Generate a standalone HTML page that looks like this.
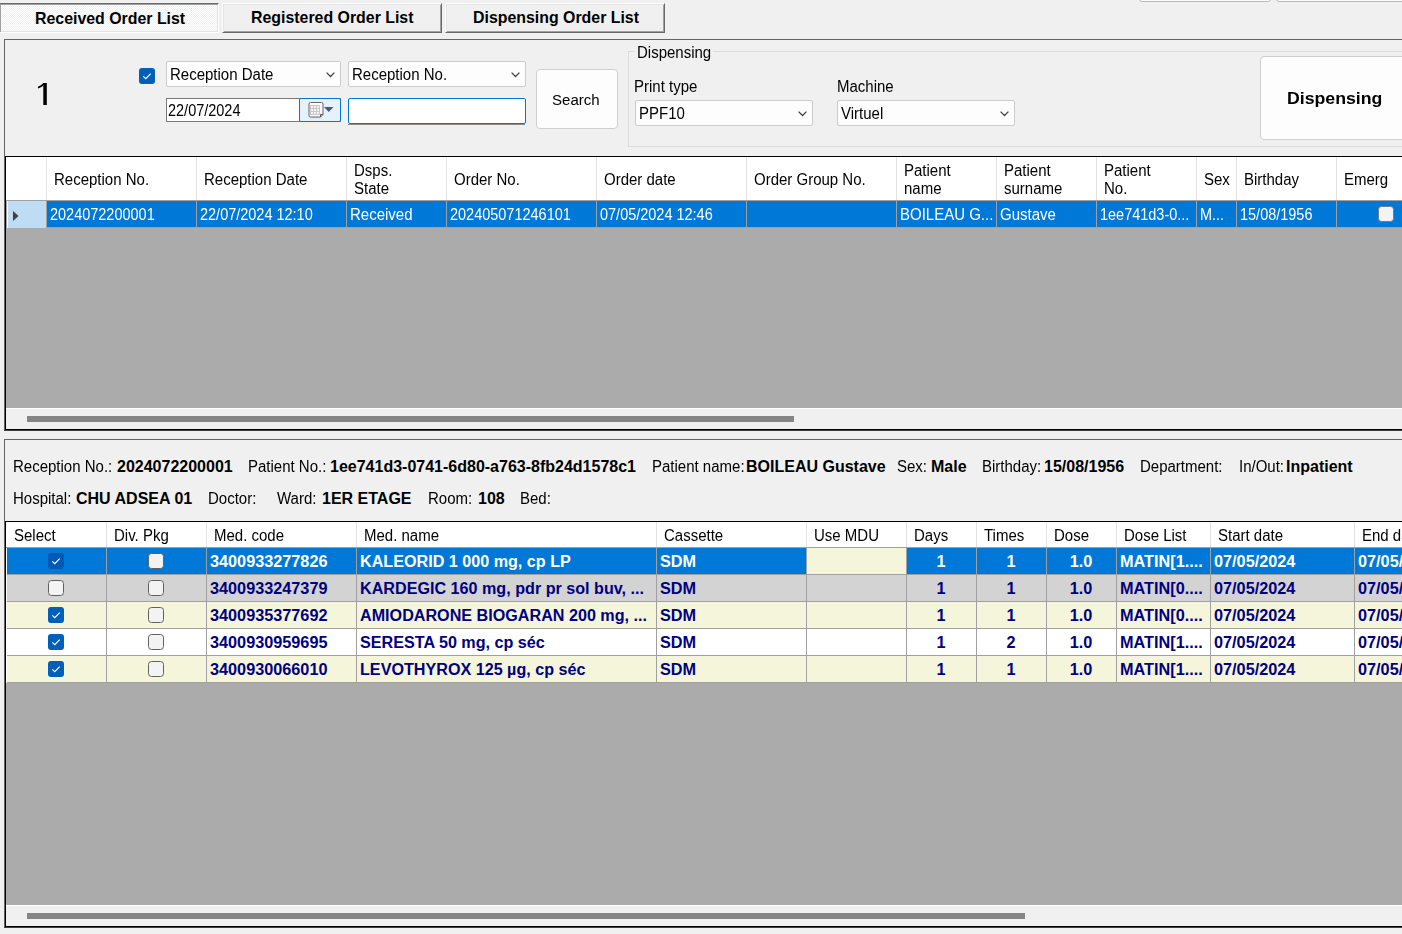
<!DOCTYPE html>
<html><head><meta charset="utf-8"><style>
html,body{margin:0;padding:0}
body{width:1402px;height:934px;overflow:hidden;position:relative;background:#F0F0F0;font-family:"Liberation Sans",sans-serif;}
body>div,body>svg{position:absolute}
.t{white-space:nowrap;color:#000}
.pressed{box-sizing:border-box;border-top:1px solid #696969;border-left:1px solid #696969;border-right:1px solid #fff;border-bottom:1px solid #fff;
 background-color:#fff;background-image:linear-gradient(45deg,#F0F0F0 25%,transparent 25%,transparent 75%,#F0F0F0 75%),linear-gradient(45deg,#F0F0F0 25%,transparent 25%,transparent 75%,#F0F0F0 75%);background-size:2px 2px;background-position:0 0,1px 1px;
 box-shadow:inset 1px 1px 0 #A0A0A0, inset -1px -1px 0 #E3E3E3}
.raised{box-sizing:border-box;border-top:1px solid #fff;border-left:1px solid #fff;border-right:1px solid #696969;border-bottom:1px solid #696969;background:#F0F0F0;box-shadow:inset 1px 1px 0 #E3E3E3, inset -1px -1px 0 #A0A0A0}
.combo{box-sizing:border-box;border:1px solid #CCCCCC;background:#FDFDFD;border-radius:2px}
.btn{box-sizing:border-box;border:1px solid #D0D0D0;background:#FDFDFD;border-radius:4px}
</style></head><body>
<div style="left:1139px;top:-10px;width:132px;height:12px;border:1px solid #B8B8B8;border-radius:3px;background:#FDFDFD;box-sizing:border-box"></div>
<div style="left:1276px;top:-10px;width:140px;height:12px;border:1px solid #B8B8B8;border-radius:3px;background:#FDFDFD;box-sizing:border-box"></div>
<div class="pressed" style="left:-1px;top:3px;width:220px;height:30px"></div>
<div class="t" style="left:35px;top:11px;font-size:15.9px;line-height:15.9px;font-weight:bold;color:#000;">Received Order List</div>
<div class="raised" style="left:222px;top:3px;width:220px;height:30px"></div>
<div class="t" style="left:251px;top:10px;font-size:15.9px;line-height:15.9px;font-weight:bold;color:#000;">Registered Order List</div>
<div class="raised" style="left:445px;top:3px;width:220px;height:30px"></div>
<div class="t" style="left:473px;top:10px;font-size:15.9px;line-height:15.9px;font-weight:bold;color:#000;">Dispensing Order List</div>
<div style="left:4px;top:39px;width:1402px;height:1px;background:#646464"></div>
<div style="left:4px;top:39px;width:1px;height:392px;background:#646464"></div>
<svg style="left:30px;top:78px" width="24" height="30" viewBox="0 0 24 30"><rect x="13.3" y="5" width="3.5" height="22" fill="#000"/><path d="M8 8.6 L8 10.6 C10.5 9.8 12.5 8.4 14 6.8 L14 5 L13.3 5 C11.8 6.8 10 7.9 8 8.6 Z" fill="#000"/></svg>
<svg style="left:139px;top:68px" width="16" height="16" viewBox="0 0 16 16"><rect x="0" y="0" width="16" height="16" rx="3" fill="#005FB8"/><path d="M4.3 8.3 L6.8 10.7 L11.7 5.6" fill="none" stroke="#fff" stroke-width="1.15"/></svg>
<div class="combo" style="left:166px;top:61px;width:175px;height:26px"></div>
<div class="t" style="left:170px;top:67px;font-size:16px;line-height:16px;color:#000;transform:scaleX(0.9375);transform-origin:0 0;">Reception Date</div>
<svg style="left:326px;top:72px" width="10" height="6" viewBox="0 0 10 6"><path d="M0.6 0.6 L4.5 4.5 L8.4 0.6" fill="none" stroke="#404040" stroke-width="1.25"/></svg>
<div class="combo" style="left:348px;top:61px;width:178px;height:26px"></div>
<div class="t" style="left:352px;top:67px;font-size:16px;line-height:16px;color:#000;transform:scaleX(0.9375);transform-origin:0 0;">Reception No.</div>
<svg style="left:511px;top:72px" width="10" height="6" viewBox="0 0 10 6"><path d="M0.6 0.6 L4.5 4.5 L8.4 0.6" fill="none" stroke="#404040" stroke-width="1.25"/></svg>
<div style="left:166px;top:98px;width:175px;height:24px;border:1px solid #7A7A7A;background:#fff;box-sizing:border-box"></div>
<div class="t" style="left:168px;top:103px;font-size:16px;line-height:16px;color:#000;transform:scaleX(0.905);transform-origin:0 0;">22/07/2024</div>
<div style="left:299px;top:98px;width:42px;height:24px;border:1px solid #0078D7;background:#E5F1FB;box-sizing:border-box;border-radius:2px"></div>
<svg style="left:305px;top:100px" width="32" height="20" viewBox="0 0 32 20"><defs><filter id="sh" x="-50%" y="-50%" width="200%" height="200%"><feGaussianBlur stdDeviation="1"/></filter></defs><rect x="4" y="4" width="13" height="14" rx="2" fill="#9BB0C8" opacity="0.35" filter="url(#sh)"/><path d="M5.5 2.5 h11 a1.5 1.5 0 0 1 1.5 1.5 v10.5 l-2.5 2.5 h-10 a1.5 1.5 0 0 1 -1.5 -1.5 v-11.5 a1.5 1.5 0 0 1 1.5 -1.5z" fill="#FAFAFC" stroke="#6E6360" stroke-width="1"/><rect x="5.5" y="5.5" width="9" height="9" fill="#F2F2FA" stroke="#C8C8C8" stroke-width="1"/><path d="M8.5 5.5v9M11.5 5.5v9M5.5 8.5h9M5.5 11.5h9" stroke="#C8C8C8" stroke-width="1"/><path d="M15.5 17 v-2.5 h2.5" fill="none" stroke="#5A5050" stroke-width="1"/><path d="M19 7 h9.5 l-4.75 5 z" fill="#4A5A82"/></svg>
<div style="left:348px;top:98px;width:178px;height:26px;border:1px solid #0078D7;background:#fff;box-sizing:border-box;border-radius:2px"></div>
<div style="left:348px;top:124px;width:177px;height:1px;background:#8A8A8A"></div>
<div class="btn" style="left:536px;top:69px;width:82px;height:60px"></div>
<div class="t" style="left:552px;top:92px;font-size:15.5px;line-height:15.5px;color:#000;transform:scaleX(0.97);transform-origin:0 0;">Search</div>
<div style="left:628px;top:51px;width:1000px;height:96px;border:1px solid #DCDCDC;box-sizing:border-box"></div>
<div style="left:634px;top:44px;width:79px;height:14px;background:#F0F0F0"></div>
<div class="t" style="left:637px;top:45px;font-size:16px;line-height:16px;color:#000;transform:scaleX(0.9375);transform-origin:0 0;">Dispensing</div>
<div class="t" style="left:634px;top:79px;font-size:16px;line-height:16px;color:#000;transform:scaleX(0.9375);transform-origin:0 0;">Print type</div>
<div class="combo" style="left:635px;top:100px;width:178px;height:26px"></div>
<div class="t" style="left:639px;top:106px;font-size:16px;line-height:16px;color:#000;transform:scaleX(0.9375);transform-origin:0 0;">PPF10</div>
<svg style="left:798px;top:111px" width="10" height="6" viewBox="0 0 10 6"><path d="M0.6 0.6 L4.5 4.5 L8.4 0.6" fill="none" stroke="#404040" stroke-width="1.25"/></svg>
<div class="t" style="left:837px;top:79px;font-size:16px;line-height:16px;color:#000;transform:scaleX(0.9375);transform-origin:0 0;">Machine</div>
<div class="combo" style="left:837px;top:100px;width:178px;height:26px"></div>
<div class="t" style="left:841px;top:106px;font-size:16px;line-height:16px;color:#000;transform:scaleX(0.9375);transform-origin:0 0;">Virtuel</div>
<svg style="left:1000px;top:111px" width="10" height="6" viewBox="0 0 10 6"><path d="M0.6 0.6 L4.5 4.5 L8.4 0.6" fill="none" stroke="#404040" stroke-width="1.25"/></svg>
<div class="btn" style="left:1260px;top:56px;width:200px;height:84px"></div>
<div class="t" style="left:1287px;top:90px;font-size:17.2px;line-height:17.2px;font-weight:bold;color:#000;transform:scaleX(1.03);transform-origin:0 0;">Dispensing</div>
<div style="left:5px;top:156px;width:1402px;height:274px;background:#ABABAB"></div>
<div style="left:5px;top:156px;width:1402px;height:1px;background:#000"></div>
<div style="left:5px;top:156px;width:1px;height:274px;background:#000"></div>
<div style="left:5px;top:429px;width:1402px;height:1px;background:#000"></div>
<div style="left:4px;top:430px;width:1402px;height:1px;background:#404040"></div>
<div style="left:6px;top:157px;width:1402px;height:43px;background:#fff"></div>
<div style="left:46px;top:157px;width:1px;height:43px;background:#E3E3E3"></div>
<div style="left:196px;top:157px;width:1px;height:43px;background:#E3E3E3"></div>
<div style="left:346px;top:157px;width:1px;height:43px;background:#E3E3E3"></div>
<div style="left:446px;top:157px;width:1px;height:43px;background:#E3E3E3"></div>
<div style="left:596px;top:157px;width:1px;height:43px;background:#E3E3E3"></div>
<div style="left:746px;top:157px;width:1px;height:43px;background:#E3E3E3"></div>
<div style="left:896px;top:157px;width:1px;height:43px;background:#E3E3E3"></div>
<div style="left:996px;top:157px;width:1px;height:43px;background:#E3E3E3"></div>
<div style="left:1096px;top:157px;width:1px;height:43px;background:#E3E3E3"></div>
<div style="left:1196px;top:157px;width:1px;height:43px;background:#E3E3E3"></div>
<div style="left:1236px;top:157px;width:1px;height:43px;background:#E3E3E3"></div>
<div style="left:1336px;top:157px;width:1px;height:43px;background:#E3E3E3"></div>
<div style="left:6px;top:200px;width:1402px;height:1px;background:#A0A0A0"></div>
<div class="t" style="left:54px;top:172px;font-size:16px;line-height:16px;color:#000;transform:scaleX(0.9375);transform-origin:0 0;">Reception No.</div>
<div class="t" style="left:204px;top:172px;font-size:16px;line-height:16px;color:#000;transform:scaleX(0.9375);transform-origin:0 0;">Reception Date</div>
<div class="t" style="left:354px;top:163px;font-size:16px;line-height:16px;color:#000;transform:scaleX(0.9375);transform-origin:0 0;">Dsps.</div>
<div class="t" style="left:354px;top:181px;font-size:16px;line-height:16px;color:#000;transform:scaleX(0.9375);transform-origin:0 0;">State</div>
<div class="t" style="left:454px;top:172px;font-size:16px;line-height:16px;color:#000;transform:scaleX(0.9375);transform-origin:0 0;">Order No.</div>
<div class="t" style="left:604px;top:172px;font-size:16px;line-height:16px;color:#000;transform:scaleX(0.9375);transform-origin:0 0;">Order date</div>
<div class="t" style="left:754px;top:172px;font-size:16px;line-height:16px;color:#000;transform:scaleX(0.9375);transform-origin:0 0;">Order Group No.</div>
<div class="t" style="left:904px;top:163px;font-size:16px;line-height:16px;color:#000;transform:scaleX(0.9375);transform-origin:0 0;">Patient</div>
<div class="t" style="left:904px;top:181px;font-size:16px;line-height:16px;color:#000;transform:scaleX(0.9375);transform-origin:0 0;">name</div>
<div class="t" style="left:1004px;top:163px;font-size:16px;line-height:16px;color:#000;transform:scaleX(0.9375);transform-origin:0 0;">Patient</div>
<div class="t" style="left:1004px;top:181px;font-size:16px;line-height:16px;color:#000;transform:scaleX(0.9375);transform-origin:0 0;">surname</div>
<div class="t" style="left:1104px;top:163px;font-size:16px;line-height:16px;color:#000;transform:scaleX(0.9375);transform-origin:0 0;">Patient</div>
<div class="t" style="left:1104px;top:181px;font-size:16px;line-height:16px;color:#000;transform:scaleX(0.9375);transform-origin:0 0;">No.</div>
<div class="t" style="left:1204px;top:172px;font-size:16px;line-height:16px;color:#000;transform:scaleX(0.9375);transform-origin:0 0;">Sex</div>
<div class="t" style="left:1244px;top:172px;font-size:16px;line-height:16px;color:#000;transform:scaleX(0.9375);transform-origin:0 0;">Birthday</div>
<div class="t" style="left:1344px;top:172px;font-size:16px;line-height:16px;color:#000;transform:scaleX(0.9375);transform-origin:0 0;">Emerg</div>
<div style="left:6px;top:201px;width:40px;height:27px;background:#BEDCF3"></div>
<div style="left:6px;top:201px;width:1px;height:27px;background:#A0A0A0"></div>
<div style="left:7px;top:201px;width:1px;height:27px;background:#FFFFFF"></div>
<svg style="left:12px;top:210px" width="8" height="12" viewBox="0 0 8 12"><path d="M1 1 L6.5 6 L1 11 Z" fill="#404040"/></svg>
<div style="left:47px;top:201px;width:1402px;height:26px;background:#0078D7"></div>
<div style="left:196px;top:201px;width:1px;height:27px;background:#A0A0A0"></div>
<div style="left:346px;top:201px;width:1px;height:27px;background:#A0A0A0"></div>
<div style="left:446px;top:201px;width:1px;height:27px;background:#A0A0A0"></div>
<div style="left:596px;top:201px;width:1px;height:27px;background:#A0A0A0"></div>
<div style="left:746px;top:201px;width:1px;height:27px;background:#A0A0A0"></div>
<div style="left:896px;top:201px;width:1px;height:27px;background:#A0A0A0"></div>
<div style="left:996px;top:201px;width:1px;height:27px;background:#A0A0A0"></div>
<div style="left:1096px;top:201px;width:1px;height:27px;background:#A0A0A0"></div>
<div style="left:1196px;top:201px;width:1px;height:27px;background:#A0A0A0"></div>
<div style="left:1236px;top:201px;width:1px;height:27px;background:#A0A0A0"></div>
<div style="left:1336px;top:201px;width:1px;height:27px;background:#A0A0A0"></div>
<div style="left:47px;top:227px;width:1402px;height:1px;background:#A0A0A0"></div>
<div style="left:46px;top:201px;width:1px;height:27px;background:#A0A0A0"></div>
<div class="t" style="left:50px;top:207px;font-size:16px;line-height:16px;color:#fff;transform:scaleX(0.905);transform-origin:0 0;">2024072200001</div>
<div class="t" style="left:200px;top:207px;font-size:16px;line-height:16px;color:#fff;transform:scaleX(0.905);transform-origin:0 0;">22/07/2024 12:10</div>
<div class="t" style="left:350px;top:207px;font-size:16px;line-height:16px;color:#fff;transform:scaleX(0.9375);transform-origin:0 0;">Received</div>
<div class="t" style="left:450px;top:207px;font-size:16px;line-height:16px;color:#fff;transform:scaleX(0.905);transform-origin:0 0;">202405071246101</div>
<div class="t" style="left:600px;top:207px;font-size:16px;line-height:16px;color:#fff;transform:scaleX(0.905);transform-origin:0 0;">07/05/2024 12:46</div>
<div class="t" style="left:900px;top:207px;font-size:16px;line-height:16px;color:#fff;transform:scaleX(0.9375);transform-origin:0 0;">BOILEAU G...</div>
<div class="t" style="left:1000px;top:207px;font-size:16px;line-height:16px;color:#fff;transform:scaleX(0.9375);transform-origin:0 0;">Gustave</div>
<div class="t" style="left:1100px;top:207px;font-size:16px;line-height:16px;color:#fff;transform:scaleX(0.905);transform-origin:0 0;">1ee741d3-0...</div>
<div class="t" style="left:1200px;top:207px;font-size:16px;line-height:16px;color:#fff;transform:scaleX(0.905);transform-origin:0 0;">M...</div>
<div class="t" style="left:1240px;top:207px;font-size:16px;line-height:16px;color:#fff;transform:scaleX(0.905);transform-origin:0 0;">15/08/1956</div>
<svg style="left:1378px;top:206px" width="16" height="16" viewBox="0 0 16 16"><rect x="0.5" y="0.5" width="15" height="15" rx="3" fill="#F3F3F3" stroke="#7A7A7A" stroke-width="1"/></svg>
<div style="left:6px;top:408px;width:1402px;height:21px;background:#F0F0F0"></div>
<div style="left:6px;top:408px;width:1402px;height:1px;background:#FFFFFF"></div>
<div style="left:27px;top:416px;width:767px;height:6px;background:#858585"></div>
<div style="left:4px;top:439px;width:1402px;height:1px;background:#646464"></div>
<div style="left:4px;top:439px;width:1px;height:489px;background:#646464"></div>
<div class="t" style="left:13px;top:459px;font-size:16px;line-height:16px;color:#000;transform:scaleX(0.9375);transform-origin:0 0;">Reception No.:</div>
<div class="t" style="left:117px;top:459px;font-size:16px;line-height:16px;font-weight:bold;color:#000;">2024072200001</div>
<div class="t" style="left:248px;top:459px;font-size:16px;line-height:16px;color:#000;transform:scaleX(0.9375);transform-origin:0 0;">Patient No.:</div>
<div class="t" style="left:330px;top:459px;font-size:16px;line-height:16px;font-weight:bold;color:#000;">1ee741d3-0741-6d80-a763-8fb24d1578c1</div>
<div class="t" style="left:652px;top:459px;font-size:16px;line-height:16px;color:#000;transform:scaleX(0.9375);transform-origin:0 0;">Patient name:</div>
<div class="t" style="left:746px;top:459px;font-size:16px;line-height:16px;font-weight:bold;color:#000;">BOILEAU Gustave</div>
<div class="t" style="left:897px;top:459px;font-size:16px;line-height:16px;color:#000;transform:scaleX(0.9375);transform-origin:0 0;">Sex:</div>
<div class="t" style="left:931px;top:459px;font-size:16px;line-height:16px;font-weight:bold;color:#000;">Male</div>
<div class="t" style="left:982px;top:459px;font-size:16px;line-height:16px;color:#000;transform:scaleX(0.9375);transform-origin:0 0;">Birthday:</div>
<div class="t" style="left:1044px;top:459px;font-size:16px;line-height:16px;font-weight:bold;color:#000;">15/08/1956</div>
<div class="t" style="left:1140px;top:459px;font-size:16px;line-height:16px;color:#000;transform:scaleX(0.9375);transform-origin:0 0;">Department:</div>
<div class="t" style="left:1239px;top:459px;font-size:16px;line-height:16px;color:#000;transform:scaleX(0.9375);transform-origin:0 0;">In/Out:</div>
<div class="t" style="left:1286px;top:459px;font-size:16px;line-height:16px;font-weight:bold;color:#000;">Inpatient</div>
<div class="t" style="left:13px;top:491px;font-size:16px;line-height:16px;color:#000;transform:scaleX(0.9375);transform-origin:0 0;">Hospital:</div>
<div class="t" style="left:76px;top:491px;font-size:16px;line-height:16px;font-weight:bold;color:#000;">CHU ADSEA 01</div>
<div class="t" style="left:208px;top:491px;font-size:16px;line-height:16px;color:#000;transform:scaleX(0.9375);transform-origin:0 0;">Doctor:</div>
<div class="t" style="left:277px;top:491px;font-size:16px;line-height:16px;color:#000;transform:scaleX(0.9375);transform-origin:0 0;">Ward:</div>
<div class="t" style="left:322px;top:491px;font-size:16px;line-height:16px;font-weight:bold;color:#000;">1ER ETAGE</div>
<div class="t" style="left:428px;top:491px;font-size:16px;line-height:16px;color:#000;transform:scaleX(0.9375);transform-origin:0 0;">Room:</div>
<div class="t" style="left:478px;top:491px;font-size:16px;line-height:16px;font-weight:bold;color:#000;">108</div>
<div class="t" style="left:520px;top:491px;font-size:16px;line-height:16px;color:#000;transform:scaleX(0.9375);transform-origin:0 0;">Bed:</div>
<div style="left:5px;top:521px;width:1402px;height:406px;background:#ABABAB"></div>
<div style="left:5px;top:521px;width:1402px;height:1px;background:#000"></div>
<div style="left:5px;top:521px;width:1px;height:406px;background:#000"></div>
<div style="left:5px;top:926px;width:1402px;height:1px;background:#000"></div>
<div style="left:4px;top:927px;width:1402px;height:1px;background:#404040"></div>
<div style="left:6px;top:522px;width:1402px;height:25px;background:#fff"></div>
<div style="left:106px;top:522px;width:1px;height:25px;background:#E3E3E3"></div>
<div style="left:206px;top:522px;width:1px;height:25px;background:#E3E3E3"></div>
<div style="left:356px;top:522px;width:1px;height:25px;background:#E3E3E3"></div>
<div style="left:656px;top:522px;width:1px;height:25px;background:#E3E3E3"></div>
<div style="left:806px;top:522px;width:1px;height:25px;background:#E3E3E3"></div>
<div style="left:906px;top:522px;width:1px;height:25px;background:#E3E3E3"></div>
<div style="left:976px;top:522px;width:1px;height:25px;background:#E3E3E3"></div>
<div style="left:1046px;top:522px;width:1px;height:25px;background:#E3E3E3"></div>
<div style="left:1116px;top:522px;width:1px;height:25px;background:#E3E3E3"></div>
<div style="left:1210px;top:522px;width:1px;height:25px;background:#E3E3E3"></div>
<div style="left:1354px;top:522px;width:1px;height:25px;background:#E3E3E3"></div>
<div style="left:6px;top:547px;width:1402px;height:1px;background:#A0A0A0"></div>
<div class="t" style="left:14px;top:528px;font-size:16px;line-height:16px;color:#000;transform:scaleX(0.9375);transform-origin:0 0;">Select</div>
<div class="t" style="left:114px;top:528px;font-size:16px;line-height:16px;color:#000;transform:scaleX(0.9375);transform-origin:0 0;">Div. Pkg</div>
<div class="t" style="left:214px;top:528px;font-size:16px;line-height:16px;color:#000;transform:scaleX(0.9375);transform-origin:0 0;">Med. code</div>
<div class="t" style="left:364px;top:528px;font-size:16px;line-height:16px;color:#000;transform:scaleX(0.9375);transform-origin:0 0;">Med. name</div>
<div class="t" style="left:664px;top:528px;font-size:16px;line-height:16px;color:#000;transform:scaleX(0.9375);transform-origin:0 0;">Cassette</div>
<div class="t" style="left:814px;top:528px;font-size:16px;line-height:16px;color:#000;transform:scaleX(0.9375);transform-origin:0 0;">Use MDU</div>
<div class="t" style="left:914px;top:528px;font-size:16px;line-height:16px;color:#000;transform:scaleX(0.9375);transform-origin:0 0;">Days</div>
<div class="t" style="left:984px;top:528px;font-size:16px;line-height:16px;color:#000;transform:scaleX(0.9375);transform-origin:0 0;">Times</div>
<div class="t" style="left:1054px;top:528px;font-size:16px;line-height:16px;color:#000;transform:scaleX(0.9375);transform-origin:0 0;">Dose</div>
<div class="t" style="left:1124px;top:528px;font-size:16px;line-height:16px;color:#000;transform:scaleX(0.9375);transform-origin:0 0;">Dose List</div>
<div class="t" style="left:1218px;top:528px;font-size:16px;line-height:16px;color:#000;transform:scaleX(0.9375);transform-origin:0 0;">Start date</div>
<div class="t" style="left:1362px;top:528px;font-size:16px;line-height:16px;color:#000;transform:scaleX(0.9375);transform-origin:0 0;">End date</div>
<div style="left:6px;top:548px;width:1402px;height:26px;background:#0078D7"></div>
<div style="left:807px;top:548px;width:99px;height:26px;background:#F5F5DC"></div>
<div style="left:6px;top:574px;width:1402px;height:1px;background:#A0A0A0"></div>
<div style="left:106px;top:548px;width:1px;height:27px;background:#A0A0A0"></div>
<div style="left:206px;top:548px;width:1px;height:27px;background:#A0A0A0"></div>
<div style="left:356px;top:548px;width:1px;height:27px;background:#A0A0A0"></div>
<div style="left:656px;top:548px;width:1px;height:27px;background:#A0A0A0"></div>
<div style="left:806px;top:548px;width:1px;height:27px;background:#A0A0A0"></div>
<div style="left:906px;top:548px;width:1px;height:27px;background:#A0A0A0"></div>
<div style="left:976px;top:548px;width:1px;height:27px;background:#A0A0A0"></div>
<div style="left:1046px;top:548px;width:1px;height:27px;background:#A0A0A0"></div>
<div style="left:1116px;top:548px;width:1px;height:27px;background:#A0A0A0"></div>
<div style="left:1210px;top:548px;width:1px;height:27px;background:#A0A0A0"></div>
<div style="left:1354px;top:548px;width:1px;height:27px;background:#A0A0A0"></div>
<svg style="left:48px;top:553px" width="16" height="16" viewBox="0 0 16 16"><rect x="0" y="0" width="16" height="16" rx="3" fill="#005AB4"/><path d="M4.3 8.3 L6.8 10.7 L11.7 5.6" fill="none" stroke="#fff" stroke-width="1.15"/></svg>
<svg style="left:148px;top:553px" width="16" height="16" viewBox="0 0 16 16"><rect x="0.5" y="0.5" width="15" height="15" rx="3" fill="#F3F3F3" stroke="#606060" stroke-width="1"/></svg>
<div class="t" style="left:210px;top:553px;font-size:16.25px;line-height:16.25px;font-weight:bold;color:#fff;">3400933277826</div>
<div class="t" style="left:360px;top:553px;font-size:16.15px;line-height:16.15px;font-weight:bold;color:#fff;">KALEORID 1 000 mg, cp LP</div>
<div class="t" style="left:660px;top:553px;font-size:16.25px;line-height:16.25px;font-weight:bold;color:#fff;">SDM</div>
<div class="t" style="left:906px;width:70px;text-align:center;top:553px;font-size:16.25px;line-height:16.25px;font-weight:bold;color:#fff">1</div>
<div class="t" style="left:976px;width:70px;text-align:center;top:553px;font-size:16.25px;line-height:16.25px;font-weight:bold;color:#fff">1</div>
<div class="t" style="left:1046px;width:70px;text-align:center;top:553px;font-size:16.25px;line-height:16.25px;font-weight:bold;color:#fff">1.0</div>
<div class="t" style="left:1120px;top:553px;font-size:16.25px;line-height:16.25px;font-weight:bold;color:#fff;">MATIN[1....</div>
<div class="t" style="left:1214px;top:553px;font-size:16.25px;line-height:16.25px;font-weight:bold;color:#fff;">07/05/2024</div>
<div class="t" style="left:1358px;top:553px;font-size:16.25px;line-height:16.25px;font-weight:bold;color:#fff;">07/05/2024</div>
<div style="left:6px;top:575px;width:1402px;height:26px;background:#D3D3D3"></div>
<div style="left:6px;top:601px;width:1402px;height:1px;background:#A0A0A0"></div>
<div style="left:106px;top:575px;width:1px;height:27px;background:#A0A0A0"></div>
<div style="left:206px;top:575px;width:1px;height:27px;background:#A0A0A0"></div>
<div style="left:356px;top:575px;width:1px;height:27px;background:#A0A0A0"></div>
<div style="left:656px;top:575px;width:1px;height:27px;background:#A0A0A0"></div>
<div style="left:806px;top:575px;width:1px;height:27px;background:#A0A0A0"></div>
<div style="left:906px;top:575px;width:1px;height:27px;background:#A0A0A0"></div>
<div style="left:976px;top:575px;width:1px;height:27px;background:#A0A0A0"></div>
<div style="left:1046px;top:575px;width:1px;height:27px;background:#A0A0A0"></div>
<div style="left:1116px;top:575px;width:1px;height:27px;background:#A0A0A0"></div>
<div style="left:1210px;top:575px;width:1px;height:27px;background:#A0A0A0"></div>
<div style="left:1354px;top:575px;width:1px;height:27px;background:#A0A0A0"></div>
<svg style="left:48px;top:580px" width="16" height="16" viewBox="0 0 16 16"><rect x="0.5" y="0.5" width="15" height="15" rx="3" fill="#F3F3F3" stroke="#606060" stroke-width="1"/></svg>
<svg style="left:148px;top:580px" width="16" height="16" viewBox="0 0 16 16"><rect x="0.5" y="0.5" width="15" height="15" rx="3" fill="#F3F3F3" stroke="#606060" stroke-width="1"/></svg>
<div class="t" style="left:210px;top:580px;font-size:16.25px;line-height:16.25px;font-weight:bold;color:#000080;">3400933247379</div>
<div class="t" style="left:360px;top:580px;font-size:16.15px;line-height:16.15px;font-weight:bold;color:#000080;">KARDEGIC 160 mg, pdr pr sol buv, ...</div>
<div class="t" style="left:660px;top:580px;font-size:16.25px;line-height:16.25px;font-weight:bold;color:#000080;">SDM</div>
<div class="t" style="left:906px;width:70px;text-align:center;top:580px;font-size:16.25px;line-height:16.25px;font-weight:bold;color:#000080">1</div>
<div class="t" style="left:976px;width:70px;text-align:center;top:580px;font-size:16.25px;line-height:16.25px;font-weight:bold;color:#000080">1</div>
<div class="t" style="left:1046px;width:70px;text-align:center;top:580px;font-size:16.25px;line-height:16.25px;font-weight:bold;color:#000080">1.0</div>
<div class="t" style="left:1120px;top:580px;font-size:16.25px;line-height:16.25px;font-weight:bold;color:#000080;">MATIN[0....</div>
<div class="t" style="left:1214px;top:580px;font-size:16.25px;line-height:16.25px;font-weight:bold;color:#000080;">07/05/2024</div>
<div class="t" style="left:1358px;top:580px;font-size:16.25px;line-height:16.25px;font-weight:bold;color:#000080;">07/05/2024</div>
<div style="left:6px;top:602px;width:1402px;height:26px;background:#F5F5DC"></div>
<div style="left:6px;top:628px;width:1402px;height:1px;background:#A0A0A0"></div>
<div style="left:106px;top:602px;width:1px;height:27px;background:#A0A0A0"></div>
<div style="left:206px;top:602px;width:1px;height:27px;background:#A0A0A0"></div>
<div style="left:356px;top:602px;width:1px;height:27px;background:#A0A0A0"></div>
<div style="left:656px;top:602px;width:1px;height:27px;background:#A0A0A0"></div>
<div style="left:806px;top:602px;width:1px;height:27px;background:#A0A0A0"></div>
<div style="left:906px;top:602px;width:1px;height:27px;background:#A0A0A0"></div>
<div style="left:976px;top:602px;width:1px;height:27px;background:#A0A0A0"></div>
<div style="left:1046px;top:602px;width:1px;height:27px;background:#A0A0A0"></div>
<div style="left:1116px;top:602px;width:1px;height:27px;background:#A0A0A0"></div>
<div style="left:1210px;top:602px;width:1px;height:27px;background:#A0A0A0"></div>
<div style="left:1354px;top:602px;width:1px;height:27px;background:#A0A0A0"></div>
<svg style="left:48px;top:607px" width="16" height="16" viewBox="0 0 16 16"><rect x="0" y="0" width="16" height="16" rx="3" fill="#005FB8"/><path d="M4.3 8.3 L6.8 10.7 L11.7 5.6" fill="none" stroke="#fff" stroke-width="1.15"/></svg>
<svg style="left:148px;top:607px" width="16" height="16" viewBox="0 0 16 16"><rect x="0.5" y="0.5" width="15" height="15" rx="3" fill="#F3F3F3" stroke="#606060" stroke-width="1"/></svg>
<div class="t" style="left:210px;top:607px;font-size:16.25px;line-height:16.25px;font-weight:bold;color:#000080;">3400935377692</div>
<div class="t" style="left:360px;top:607px;font-size:16.15px;line-height:16.15px;font-weight:bold;color:#000080;">AMIODARONE BIOGARAN 200 mg, ...</div>
<div class="t" style="left:660px;top:607px;font-size:16.25px;line-height:16.25px;font-weight:bold;color:#000080;">SDM</div>
<div class="t" style="left:906px;width:70px;text-align:center;top:607px;font-size:16.25px;line-height:16.25px;font-weight:bold;color:#000080">1</div>
<div class="t" style="left:976px;width:70px;text-align:center;top:607px;font-size:16.25px;line-height:16.25px;font-weight:bold;color:#000080">1</div>
<div class="t" style="left:1046px;width:70px;text-align:center;top:607px;font-size:16.25px;line-height:16.25px;font-weight:bold;color:#000080">1.0</div>
<div class="t" style="left:1120px;top:607px;font-size:16.25px;line-height:16.25px;font-weight:bold;color:#000080;">MATIN[0....</div>
<div class="t" style="left:1214px;top:607px;font-size:16.25px;line-height:16.25px;font-weight:bold;color:#000080;">07/05/2024</div>
<div class="t" style="left:1358px;top:607px;font-size:16.25px;line-height:16.25px;font-weight:bold;color:#000080;">07/05/2024</div>
<div style="left:6px;top:629px;width:1402px;height:26px;background:#FFFFFF"></div>
<div style="left:6px;top:655px;width:1402px;height:1px;background:#A0A0A0"></div>
<div style="left:106px;top:629px;width:1px;height:27px;background:#A0A0A0"></div>
<div style="left:206px;top:629px;width:1px;height:27px;background:#A0A0A0"></div>
<div style="left:356px;top:629px;width:1px;height:27px;background:#A0A0A0"></div>
<div style="left:656px;top:629px;width:1px;height:27px;background:#A0A0A0"></div>
<div style="left:806px;top:629px;width:1px;height:27px;background:#A0A0A0"></div>
<div style="left:906px;top:629px;width:1px;height:27px;background:#A0A0A0"></div>
<div style="left:976px;top:629px;width:1px;height:27px;background:#A0A0A0"></div>
<div style="left:1046px;top:629px;width:1px;height:27px;background:#A0A0A0"></div>
<div style="left:1116px;top:629px;width:1px;height:27px;background:#A0A0A0"></div>
<div style="left:1210px;top:629px;width:1px;height:27px;background:#A0A0A0"></div>
<div style="left:1354px;top:629px;width:1px;height:27px;background:#A0A0A0"></div>
<svg style="left:48px;top:634px" width="16" height="16" viewBox="0 0 16 16"><rect x="0" y="0" width="16" height="16" rx="3" fill="#005FB8"/><path d="M4.3 8.3 L6.8 10.7 L11.7 5.6" fill="none" stroke="#fff" stroke-width="1.15"/></svg>
<svg style="left:148px;top:634px" width="16" height="16" viewBox="0 0 16 16"><rect x="0.5" y="0.5" width="15" height="15" rx="3" fill="#F3F3F3" stroke="#606060" stroke-width="1"/></svg>
<div class="t" style="left:210px;top:634px;font-size:16.25px;line-height:16.25px;font-weight:bold;color:#000080;">3400930959695</div>
<div class="t" style="left:360px;top:634px;font-size:16.15px;line-height:16.15px;font-weight:bold;color:#000080;">SERESTA 50 mg, cp séc</div>
<div class="t" style="left:660px;top:634px;font-size:16.25px;line-height:16.25px;font-weight:bold;color:#000080;">SDM</div>
<div class="t" style="left:906px;width:70px;text-align:center;top:634px;font-size:16.25px;line-height:16.25px;font-weight:bold;color:#000080">1</div>
<div class="t" style="left:976px;width:70px;text-align:center;top:634px;font-size:16.25px;line-height:16.25px;font-weight:bold;color:#000080">2</div>
<div class="t" style="left:1046px;width:70px;text-align:center;top:634px;font-size:16.25px;line-height:16.25px;font-weight:bold;color:#000080">1.0</div>
<div class="t" style="left:1120px;top:634px;font-size:16.25px;line-height:16.25px;font-weight:bold;color:#000080;">MATIN[1....</div>
<div class="t" style="left:1214px;top:634px;font-size:16.25px;line-height:16.25px;font-weight:bold;color:#000080;">07/05/2024</div>
<div class="t" style="left:1358px;top:634px;font-size:16.25px;line-height:16.25px;font-weight:bold;color:#000080;">07/05/2024</div>
<div style="left:6px;top:656px;width:1402px;height:26px;background:#F5F5DC"></div>
<div style="left:6px;top:682px;width:1402px;height:1px;background:#A0A0A0"></div>
<div style="left:106px;top:656px;width:1px;height:27px;background:#A0A0A0"></div>
<div style="left:206px;top:656px;width:1px;height:27px;background:#A0A0A0"></div>
<div style="left:356px;top:656px;width:1px;height:27px;background:#A0A0A0"></div>
<div style="left:656px;top:656px;width:1px;height:27px;background:#A0A0A0"></div>
<div style="left:806px;top:656px;width:1px;height:27px;background:#A0A0A0"></div>
<div style="left:906px;top:656px;width:1px;height:27px;background:#A0A0A0"></div>
<div style="left:976px;top:656px;width:1px;height:27px;background:#A0A0A0"></div>
<div style="left:1046px;top:656px;width:1px;height:27px;background:#A0A0A0"></div>
<div style="left:1116px;top:656px;width:1px;height:27px;background:#A0A0A0"></div>
<div style="left:1210px;top:656px;width:1px;height:27px;background:#A0A0A0"></div>
<div style="left:1354px;top:656px;width:1px;height:27px;background:#A0A0A0"></div>
<svg style="left:48px;top:661px" width="16" height="16" viewBox="0 0 16 16"><rect x="0" y="0" width="16" height="16" rx="3" fill="#005FB8"/><path d="M4.3 8.3 L6.8 10.7 L11.7 5.6" fill="none" stroke="#fff" stroke-width="1.15"/></svg>
<svg style="left:148px;top:661px" width="16" height="16" viewBox="0 0 16 16"><rect x="0.5" y="0.5" width="15" height="15" rx="3" fill="#F3F3F3" stroke="#606060" stroke-width="1"/></svg>
<div class="t" style="left:210px;top:661px;font-size:16.25px;line-height:16.25px;font-weight:bold;color:#000080;">3400930066010</div>
<div class="t" style="left:360px;top:661px;font-size:16.15px;line-height:16.15px;font-weight:bold;color:#000080;">LEVOTHYROX 125 µg, cp séc</div>
<div class="t" style="left:660px;top:661px;font-size:16.25px;line-height:16.25px;font-weight:bold;color:#000080;">SDM</div>
<div class="t" style="left:906px;width:70px;text-align:center;top:661px;font-size:16.25px;line-height:16.25px;font-weight:bold;color:#000080">1</div>
<div class="t" style="left:976px;width:70px;text-align:center;top:661px;font-size:16.25px;line-height:16.25px;font-weight:bold;color:#000080">1</div>
<div class="t" style="left:1046px;width:70px;text-align:center;top:661px;font-size:16.25px;line-height:16.25px;font-weight:bold;color:#000080">1.0</div>
<div class="t" style="left:1120px;top:661px;font-size:16.25px;line-height:16.25px;font-weight:bold;color:#000080;">MATIN[1....</div>
<div class="t" style="left:1214px;top:661px;font-size:16.25px;line-height:16.25px;font-weight:bold;color:#000080;">07/05/2024</div>
<div class="t" style="left:1358px;top:661px;font-size:16.25px;line-height:16.25px;font-weight:bold;color:#000080;">07/05/2024</div>
<div style="left:6px;top:548px;width:1px;height:135px;background:#FFFFFF"></div>
<div style="left:6px;top:905px;width:1402px;height:21px;background:#F0F0F0"></div>
<div style="left:6px;top:905px;width:1402px;height:1px;background:#FFFFFF"></div>
<div style="left:27px;top:913px;width:998px;height:6px;background:#858585"></div>
</body></html>
